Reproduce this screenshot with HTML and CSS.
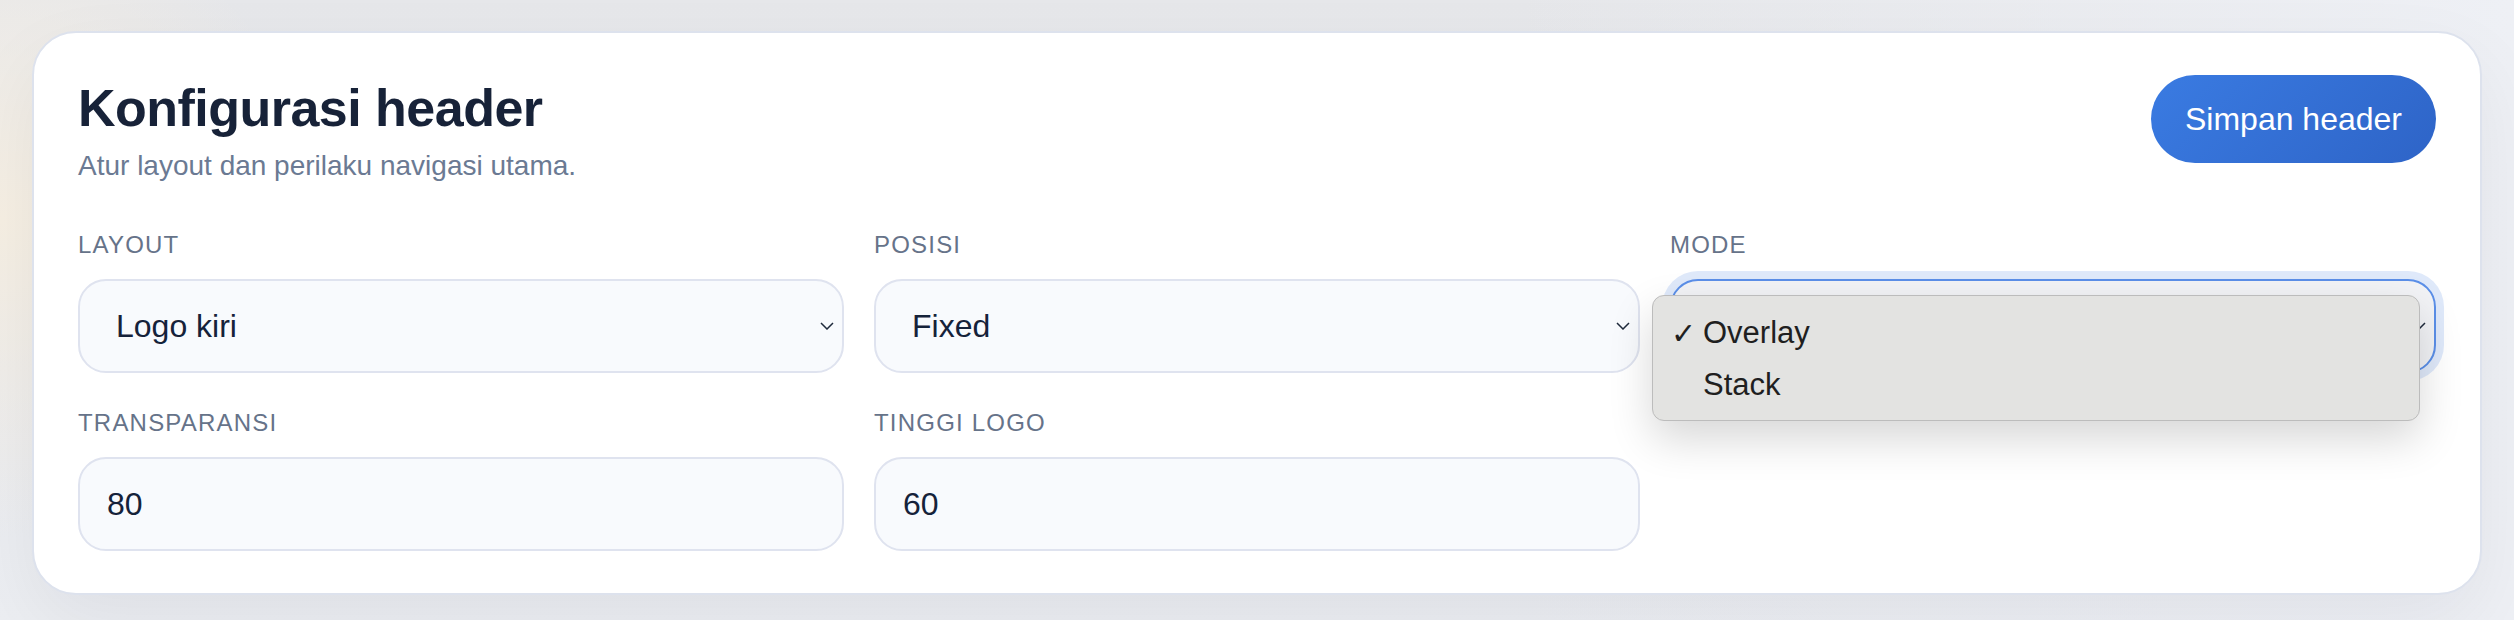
FILE: index.html
```html
<!DOCTYPE html>
<html lang="id">
  <head>
    <meta charset="UTF-8" />
    <meta name="viewport" content="width=device-width, initial-scale=1.0" />
    <title>Konfigurasi header</title>
    <link rel="stylesheet" href="styles.css">
  </head>
  <body>
    <section class="card">
      <div class="card-head">
        <div class="card-title">
          <h1>Konfigurasi header</h1>
          <p class="subtitle">Atur layout dan perilaku navigasi utama.</p>
        </div>
        <button type="button" class="btn-save">Simpan header</button>
      </div>

      <form class="fields">
        <div class="field">
          <label for="layout">Layout</label>
          <div class="select-wrap">
            <select id="layout">
              <option>Logo kiri</option>
              <option>Logo tengah</option>
            </select>
            <svg class="chevron" viewBox="0 0 14 8" width="14" height="8">
              <polyline points="1,1 7,7 13,1" />
            </svg>
          </div>
        </div>

        <div class="field">
          <label for="posisi">Posisi</label>
          <div class="select-wrap">
            <select id="posisi">
              <option>Fixed</option>
              <option>Static</option>
            </select>
            <svg class="chevron" viewBox="0 0 14 8" width="14" height="8">
              <polyline points="1,1 7,7 13,1" />
            </svg>
          </div>
        </div>

        <div class="field">
          <label for="mode">Mode</label>
          <div class="select-wrap is-open">
            <select id="mode">
              <option>Overlay</option>
              <option>Stack</option>
            </select>
            <svg class="chevron" viewBox="0 0 14 8" width="14" height="8">
              <polyline points="1,1 7,7 13,1" />
            </svg>
            <!-- native popup of the open select -->
            <ul class="select-menu">
              <li class="selected"><span class="check">✓</span>Overlay</li>
              <li><span class="check"></span>Stack</li>
            </ul>
          </div>
        </div>

        <div class="field">
          <label for="transparansi">Transparansi</label>
          <input type="text" id="transparansi" value="80" />
        </div>

        <div class="field">
          <label for="tinggi">Tinggi logo</label>
          <input type="text" id="tinggi" value="60" />
        </div>
      </form>
    </section>
  </body>
</html>
```

FILE: styles.css
```css
body {
  font-family: "Liberation Sans", Arial, sans-serif;
  margin: 0;
  padding: 31px 32px;
  min-height: 620px;
  box-sizing: border-box;
  background:
    radial-gradient(circle at 0% 35%, #f6efe3 0, rgba(246, 239, 227, 0) 320px),
    linear-gradient(90deg, rgba(238, 240, 245, 0) 60%, #eef0f5 100%),
    linear-gradient(180deg, #e6e7ea 0%, #e9ebf0 60%, #eceef2 100%);
}

.card {
  background-color: white;
  border: 2px solid #dde2ed;
  border-radius: 44px;
  padding: 44px 44px 42px;
  box-shadow: 0 30px 80px rgba(15, 23, 42, 0.06);
}

.card-head {
  display: flex;
  justify-content: space-between;
  align-items: flex-start;
}

h1 {
  margin: 0;
  font-size: 52px;
  line-height: 1.2;
  letter-spacing: -0.01em;
  font-weight: 700;
  color: #172238;
}

.subtitle {
  margin: 6px 0 0;
  font-size: 28px;
  line-height: 42px;
  color: #6b7a93;
}

.btn-save {
  margin-top: -2px;
  padding: 24px 34px;
  font-family: inherit;
  font-size: 32px;
  line-height: 40px;
  color: white;
  border: none;
  border-radius: 999px;
  background: linear-gradient(135deg, #3a7be2 0%, #2e64c7 100%);
  cursor: pointer;
}

.fields {
  margin-top: 40px;
  display: grid;
  grid-template-columns: repeat(3, 1fr);
  column-gap: 30px;
  row-gap: 32px;
}

.field label {
  display: block;
  margin-bottom: 16px;
  font-size: 24px;
  line-height: 36px;
  letter-spacing: 0.05em;
  text-transform: uppercase;
  color: #667389;
}

.select-wrap {
  position: relative;
}

select,
input {
  display: block;
  width: 100%;
  height: 94px;
  box-sizing: border-box;
  border: 2px solid #dfe3ef;
  border-radius: 28px;
  background-color: #f8fafd;
  font-family: inherit;
  font-size: 32px;
  color: #15223a;
  outline: none;
}

select {
  appearance: none;
  -webkit-appearance: none;
  padding: 0 50px 0 36px;
}

input {
  padding: 0 27px;
}

.chevron {
  position: absolute;
  right: 10px;
  top: 50%;
  transform: translateY(-50%);
  fill: none;
  stroke: #1f2a3c;
  stroke-width: 1.5;
  pointer-events: none;
}

.select-wrap.is-open select {
  border-color: #5b8fe8;
  background-color: #f2f3f6;
  box-shadow: 0 0 0 8px #dfe9fa;
}

.select-menu {
  position: absolute;
  left: -18px;
  top: 16px;
  width: 768px;
  box-sizing: border-box;
  margin: 0;
  padding: 11px 0 9px;
  list-style: none;
  background-color: #e3e3e1;
  border: 1px solid #bcbcbc;
  border-radius: 12px;
  box-shadow: 0 18px 44px rgba(0, 0, 0, 0.16);
  z-index: 5;
}

.select-menu li {
  display: flex;
  align-items: center;
  height: 52px;
  padding-left: 18px;
  font-size: 31px;
  color: #1f1f1f;
}

.select-menu .check {
  width: 32px;
  font-family: "DejaVu Sans", sans-serif;
  font-size: 30px;
}
```
